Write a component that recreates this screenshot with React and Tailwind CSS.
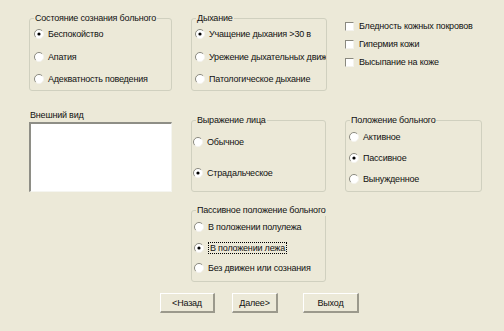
import { useState } from "react";

function Radio({ checked }) {
  return (
    <svg width="10" height="10" viewBox="0 0 10 10" className="shrink-0">
      <circle cx="5" cy="5" r="4.5" fill="#fff" />
      <path d="M1.8 8.2 A4.5 4.5 0 0 1 8.2 1.8" stroke="#8a897f" fill="none" />
      <path d="M8.2 1.8 A4.5 4.5 0 0 1 1.8 8.2" stroke="#f4f3ee" fill="none" />
      {checked && <circle cx="5" cy="5" r="1.6" fill="#000" />}
    </svg>
  );
}

function RadioRow({ label, checked, focused, onClick }) {
  return (
    <div
      onClick={onClick}
      className="flex items-center gap-[4px] h-[12px] whitespace-nowrap overflow-hidden cursor-default"
    >
      <Radio checked={checked} />
      <span
        className={
          focused
            ? "border border-dotted border-black px-[1px] leading-[10px]"
            : "leading-[12px]"
        }
      >
        {label}
      </span>
    </div>
  );
}

function Group({ legend, className, children }) {
  return (
    <fieldset
      className={`border border-[#D0D0BF] rounded-[3px] shrink-0 min-w-0 overflow-hidden ${className}`}
    >
      <legend className="ml-[4px] px-[1px] leading-[12px] whitespace-nowrap">{legend}</legend>
      {children}
    </fieldset>
  );
}

function Options({ items, value, setValue, className, focused }) {
  return (
    <div className={`flex flex-col ${className}`}>
      {items.map((it, i) => (
        <RadioRow
          key={it}
          label={it}
          checked={value === i}
          focused={focused && value === i}
          onClick={() => setValue(i)}
        />
      ))}
    </div>
  );
}

function Check({ label }) {
  const [on, setOn] = useState(false);
  return (
    <div
      onClick={() => setOn(!on)}
      className="flex items-center gap-[5px] h-[12px] whitespace-nowrap cursor-default"
    >
      <div className="w-[9px] h-[9px] bg-white border-t border-l border-t-[#8a897f] border-l-[#8a897f] border-b border-r border-b-[#f4f3ee] border-r-[#f4f3ee] flex items-center justify-center text-[8px] leading-none">
        {on ? "✓" : ""}
      </div>
      <span className="leading-[12px]">{label}</span>
    </div>
  );
}

function Button({ children, className }) {
  return (
    <button
      className={`h-[20px] bg-[#ECE9D8] border-t border-l border-white border-r-2 border-b-2 border-r-[#9b998c] border-b-[#9b998c] leading-[12px] ${className}`}
    >
      {children}
    </button>
  );
}

export default function App() {
  const [consc, setConsc] = useState(0);
  const [breath, setBreath] = useState(0);
  const [face, setFace] = useState(1);
  const [pos, setPos] = useState(1);
  const [passive, setPassive] = useState(1);

  return (
    <div className="w-[504px] h-[331px] bg-[#ECE9D8] overflow-hidden pl-[29px] pt-[12px] text-[9px] tracking-[-0.2px] text-[#111] font-['Liberation_Sans',_Arial,_sans-serif]">
      {/* row 1 */}
      <div className="flex items-start">
        <Group legend="Состояние сознания больного" className="w-[143px] h-[79px]">
          <Options
            className="mt-[4px] gap-[10.5px] pl-[4px]"
            items={["Беспокойство", "Апатия", "Адекватность поведения"]}
            value={consc}
            setValue={setConsc}
          />
        </Group>
        <Group legend="Дыхание" className="w-[136px] h-[79px] ml-[19px]">
          <Options
            className="mt-[4px] gap-[10.5px] pl-[3px]"
            items={[
              "Учащение дыхания >30 в",
              "Урежение дыхательных движений",
              "Патологическое дыхание",
            ]}
            value={breath}
            setValue={setBreath}
          />
        </Group>
        <div className="flex flex-col ml-[18px] mt-[8px] gap-[6px]">
          <Check label="Бледность кожных покровов" />
          <Check label="Гипермия кожи" />
          <Check label="Высыпание на коже" />
        </div>
      </div>

      {/* row 2 */}
      <div className="flex items-start mt-[18px]">
        <div className="w-[143px] shrink-0">
          <div className="leading-[12px] pl-[1px]">Внешний вид</div>
          <div className="mt-[1px] h-[70px] bg-white border-t-2 border-l-2 border-[#8E8E86] border-r border-b border-r-[#F5F5F0] border-b-[#F5F5F0]" />
        </div>
        <Group legend="Выражение лица" className="w-[135px] h-[78px] ml-[19px] mt-[5px]">
          <Options
            className="mt-[10px] gap-[19px] pl-[1px]"
            items={["Обычное", "Страдальческое"]}
            value={face}
            setValue={setFace}
          />
        </Group>
        <Group legend="Положение больного" className="w-[137px] h-[78px] ml-[19px] mt-[5px]">
          <Options
            className="mt-[5px] gap-[9px] pl-[3px]"
            items={["Активное", "Пассивное", "Вынужденное"]}
            value={pos}
            setValue={setPos}
          />
        </Group>
      </div>

      {/* row 3 */}
      <div className="flex mt-[12px] ml-[162px]">
        <Group legend="Пассивное положение больного" className="w-[135px] h-[78px]">
          <Options
            className="mt-[5px] gap-[8.5px] pl-[2px]"
            items={["В положении полулежа", "В положении лежа", "Без движен или сознания"]}
            value={passive}
            setValue={setPassive}
            focused
          />
        </Group>
      </div>

      {/* buttons */}
      <div className="flex mt-[11px] ml-[131px]">
        <Button className="w-[55px]">&lt;Назад</Button>
        <Button className="w-[46px] ml-[17px]">Далее&gt;</Button>
        <Button className="w-[56px] ml-[25px]">Выход</Button>
      </div>
    </div>
  );
}
